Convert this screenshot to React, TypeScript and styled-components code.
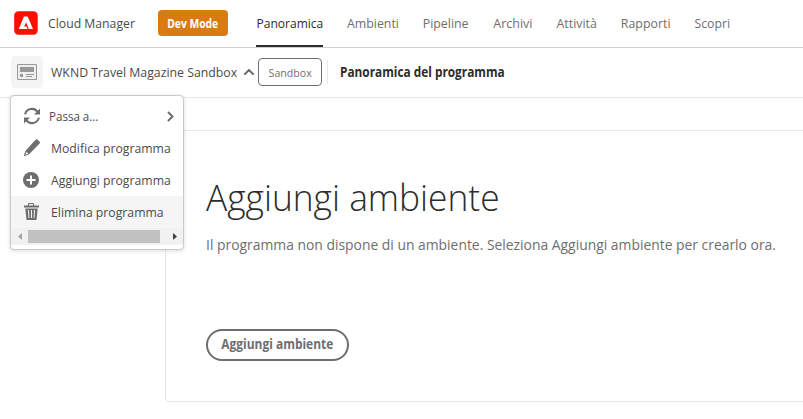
import React from 'react';
import styled, { createGlobalStyle } from 'styled-components';

const GlobalStyle = createGlobalStyle`
  * { box-sizing: border-box; }
  body {
    margin: 0;
    overflow: hidden;
    background: #fff;
    color: #4b4b4b;
    font-family: "Open Sans", sans-serif;
    font-size: 13.3px;
  }
  svg { display: block; flex: none; }
`;

/* Slightly condensed text; the ratio is the horizontal scale. */
const Condensed = styled.span<{ $ratio?: number; $center?: boolean }>`
  display: inline-block;
  flex: none;
  transform: scaleX(${(p) => p.$ratio ?? 0.92});
  transform-origin: ${(p) => (p.$center ? 'center' : 'left')};
  white-space: nowrap;
`;

const Page = styled.div`
  display: flex;
  flex-direction: column;
  height: 419px;
  overflow: hidden;
`;

const Header = styled.header`
  display: flex;
  align-items: stretch;
  flex: none;
  height: 48px;
  padding-left: 14px;
  border-bottom: 1px solid #cfcfcf;
`;

const Brand = styled.div`
  display: flex;
  align-items: center;
  flex: none;
  width: 144px;
  gap: 10px;
  padding-bottom: 1px;
`;

const ModeBadge = styled.div`
  align-self: center;
  display: flex;
  align-items: center;
  justify-content: center;
  flex: none;
  width: 70px;
  height: 26px;
  margin-bottom: 1px;
  border-radius: 4px;
  background: #da7b11;
  color: #fff;
  font-size: 12px;
  font-weight: 700;
`;

const Tabs = styled.nav`
  display: flex;
  gap: 24px;
  margin-left: 28px;
`;

const Tab = styled.a<{ $width: number; $active?: boolean }>`
  display: flex;
  align-items: center;
  justify-content: center;
  flex: none;
  width: ${(p) => p.$width}px;
  padding-bottom: ${(p) => (p.$active ? 0 : 1)}px;
  padding-top: ${(p) => (p.$active ? 1 : 0)}px;
  border-bottom: ${(p) => (p.$active ? '2px solid #2c2c2c' : '0')};
  color: ${(p) => (p.$active ? '#2c2c2c' : '#6e6e6e')};
`;

const ProgramBar = styled.div`
  display: flex;
  align-items: center;
  flex: none;
  height: 50px;
  padding: 0 0 1px 11px;
  border-bottom: 1px solid #e6e6e6;
`;

const Thumbnail = styled.div`
  display: flex;
  align-items: center;
  justify-content: center;
  flex: none;
  width: 32px;
  height: 32px;
  border-radius: 4px;
  background: #f4f4f4;
`;

const ProgramName = styled.div`
  flex: none;
  width: 201px;
  padding-left: 8px;
`;

const Tag = styled.div`
  display: flex;
  align-items: center;
  justify-content: center;
  flex: none;
  width: 64px;
  height: 28px;
  margin-left: 4px;
  border: 1px solid #6e6e6e;
  border-radius: 4px;
  color: #6e6e6e;
  font-size: 11.4px;
`;

const Divider = styled.div`
  width: 1px;
  height: 24px;
  margin: 0 12px 0 5px;
  background: #e6e6e6;
`;

const PageTitle = styled.div`
  color: #2c2c2c;
  font-weight: 700;
`;

const Card = styled.main`
  display: flex;
  flex-direction: column;
  align-items: flex-start;
  flex: none;
  width: 700px;
  height: 272px;
  margin: 32px 0 0 165px;
  padding: 39px 0 0 40px;
  border: 1px solid #e6e6e6;
  border-radius: 4px;
`;

const Heading = styled.h1`
  margin: 0;
  color: #2c2c2c;
  font-size: 37.5px;
  font-weight: 300;
  line-height: 54px;
`;

const Description = styled.p`
  margin: 9px 0 0;
  color: #6e6e6e;
  font-size: 15.2px;
  line-height: 22px;
`;

const ActionButton = styled.button`
  display: flex;
  align-items: center;
  justify-content: center;
  width: 143px;
  height: 32px;
  margin-top: 74px;
  padding: 0 0 2px;
  border: 2px solid #6e6e6e;
  border-radius: 16px;
  background: #fff;
  color: #6e6e6e;
  font-family: inherit;
  font-size: 13.3px;
  font-weight: 700;
  line-height: 26px;
`;

const Menu = styled.div`
  position: absolute;
  top: 95px;
  left: 10px;
  width: 174px;
  height: 155px;
  padding-top: 4px;
  border: 1px solid #cacaca;
  border-radius: 4px;
  background: #fff;
  box-shadow: 0 1px 4px rgba(0, 0, 0, 0.15);
`;

const MenuItem = styled.div<{ $active?: boolean; $gap?: number }>`
  display: grid;
  grid-template-columns: 18px minmax(0, 1fr) auto;
  column-gap: ${(p) => p.$gap ?? 10}px;
  align-items: center;
  justify-items: start;
  height: 32px;
  padding: 0 9px 0 12px;
  background: ${(p) => (p.$active ? '#f5f5f5' : '#fff')};
`;

const Scrollbar = styled.div`
  display: grid;
  grid-template-columns: 17px 132px 1fr;
  align-items: center;
  justify-items: center;
  height: 17px;
  background: #f1f1f1;
`;

const Thumb = styled.div`
  width: 132px;
  height: 13px;
  background: #c1c1c1;
`;

const EndArrow = styled.div`
  padding-left: 7px;
`;

const AdobeLogo = () => (
  <svg width="24" height="24" viewBox="0 0 24 24">
    <rect width="23.5" height="23.5" x=".2" y=".2" rx="4.2" fill="#fa0f00" />
    <path fill="#fff" d="M13.7 5.4 19 18h-3.6a.7.7 0 0 1-.7-.5l-2.4-5.8c-.1-.2-.3-.2-.4 0l-1.6 3.6c-.1.2 0 .3.2.3h1.8c.2 0 .3.1.4.2l.8 1.8c.1.2 0 .4-.2.4H5.2c-.2 0-.3-.2-.2-.4L9.800 5.800c.1-.3.3-.4.6-.4Z" />
  </svg>
);

const ProgramIcon = () => (
  <svg width="20" height="18" viewBox="0 0 20 18">
    <path fill="#eee" stroke="#999" d="M.5 1.500h19v15H.5z" />
    <path fill="#999" d="M3 4h14v5H3zM3 11h3v3H3zM9 11h8v1H9zM9 13h6v1H9z" />
  </svg>
);

const RefreshIcon = () => (
  <svg width="18" height="18" viewBox="0 0 18 18" fill="none" stroke="#6e6e6e" strokeWidth="2">
    <path d="M2.100 7.400A7 7 0 0 1 14.600 4.800M15.900 10.600A7 7 0 0 1 3.400 13.200" />
    <path fill="#6e6e6e" stroke="none" d="M17 1.500v6h-6zM1 16.500v-6h6z" />
  </svg>
);

const PencilIcon = () => (
  <svg width="18" height="18" viewBox="0 0 18 18" fill="#6e6e6e">
    <path d="m10.900 2.600 2.200-2.100c.4-.4.9-.4 1.300 0l2.400 2.400c.4.4.4.9 0 1.300L5.900 15.500 1.300 17.100c-.4.100-.6-.1-.4-.5l1.500-4.700Zm-7.500 10.100-1 3 3-1Z" fillRule="evenodd" />
  </svg>
);

const AddIcon = () => (
  <svg width="18" height="18" viewBox="0 0 18 18">
    <circle cx="8" cy="9" r="8" fill="#6e6e6e" />
    <path d="M3.500 9h9M8 4.500v9" stroke="#fff" strokeWidth="2" />
  </svg>
);

const TrashIcon = () => (
  <svg width="18" height="18" viewBox="0 0 18 18">
    <path fill="none" stroke="#6e6e6e" d="M5.500 3V.5h5V3" />
    <path fill="#6e6e6e" d="M1 2.500h15v2H1zM2.300 5.500h12.400L13.500 17h-10z" />
    <path stroke="#f5f5f5" d="m5.500 7 .5 8M8.500 7v8M11.500 7l-.5 8" />
  </svg>
);

const ChevronUp = () => (
  <svg width="10" height="6" viewBox="0 0 10 6" fill="none" stroke="#6e6e6e" strokeWidth="2" strokeLinecap="round">
    <path d="m1 5 4-4 4 4" />
  </svg>
);

const ChevronRight = () => (
  <svg width="7" height="11" viewBox="0 0 7 11" fill="none" stroke="#6e6e6e" strokeWidth="2" strokeLinecap="round">
    <path d="m1.500 1.500 4 4-4 4" />
  </svg>
);

const ArrowLeft = () => (
  <svg width="4" height="7" viewBox="0 0 4 7"><path fill="#a3a3a3" d="M4 0v7L0 3.500z" /></svg>
);

const ArrowRight = () => (
  <svg width="4" height="7" viewBox="0 0 4 7"><path fill="#404040" d="M0 0v7l4-3.500z" /></svg>
);

const tabs = [
  { label: 'Panoramica', width: 67, ratio: 0.905, active: true },
  { label: 'Ambienti', width: 52, ratio: 0.93 },
  { label: 'Pipeline', width: 46, ratio: 0.93 },
  { label: 'Archivi', width: 39, ratio: 0.94 },
  { label: 'Attività', width: 41, ratio: 0.93 },
  { label: 'Rapporti', width: 49, ratio: 0.93 },
  { label: 'Scopri', width: 36, ratio: 0.92 },
];

export default function App() {
  return (
    <Page>
      <GlobalStyle />
      <Header>
        <Brand><AdobeLogo /><Condensed>Cloud Manager</Condensed></Brand>
        <ModeBadge><Condensed $center $ratio={0.86}>Dev Mode</Condensed></ModeBadge>
        <Tabs>
          {tabs.map((t) => (
            <Tab key={t.label} $width={t.width} $active={t.active}>
              <Condensed $center $ratio={t.ratio}>{t.label}</Condensed>
            </Tab>
          ))}
        </Tabs>
      </Header>
      <ProgramBar>
        <Thumbnail><ProgramIcon /></Thumbnail>
        <ProgramName><Condensed $ratio={0.925}>WKND Travel Magazine Sandbox</Condensed></ProgramName>
        <ChevronUp />
        <Tag><Condensed $center $ratio={0.93}>Sandbox</Condensed></Tag>
        <Divider />
        <PageTitle><Condensed $ratio={0.89}>Panoramica del programma</Condensed></PageTitle>
      </ProgramBar>
      <Card>
        <Heading><Condensed $ratio={0.942}>Aggiungi ambiente</Condensed></Heading>
        <Description>
          <Condensed $ratio={0.914}>
            Il programma non dispone di un ambiente. Seleziona Aggiungi ambiente per crearlo ora.
          </Condensed>
        </Description>
        <ActionButton><Condensed $center $ratio={0.9}>Aggiungi ambiente</Condensed></ActionButton>
      </Card>
      <Menu>
        <MenuItem $gap={8}><RefreshIcon /><Condensed $ratio={0.87}>Passa a...</Condensed><ChevronRight /></MenuItem>
        <MenuItem><PencilIcon /><Condensed>Modifica programma</Condensed></MenuItem>
        <MenuItem><AddIcon /><Condensed>Aggiungi programma</Condensed></MenuItem>
        <MenuItem $active><TrashIcon /><Condensed>Elimina programma</Condensed></MenuItem>
        <Scrollbar><ArrowLeft /><Thumb /><EndArrow><ArrowRight /></EndArrow></Scrollbar>
      </Menu>
    </Page>
  );
}
